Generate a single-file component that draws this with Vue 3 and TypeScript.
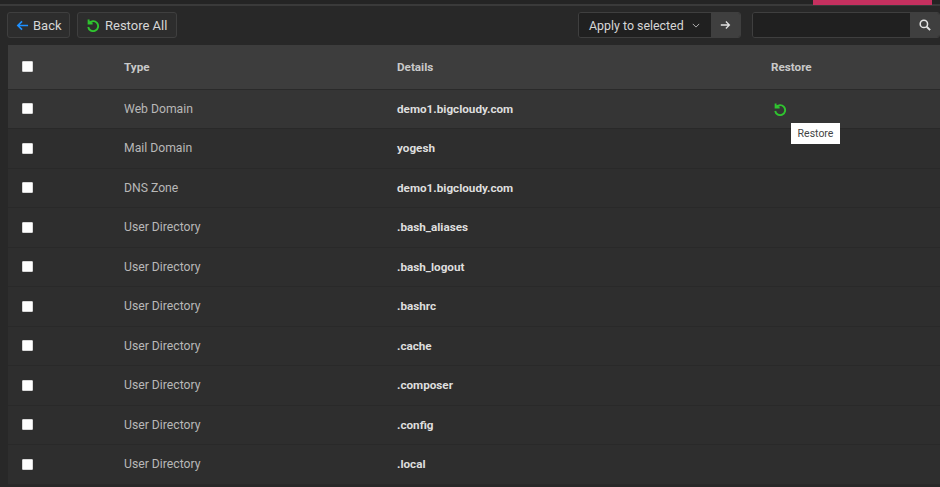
<script setup lang="ts">
interface Row { type: string; details: string }
const rows: Row[] = [
  { type: 'Web Domain', details: 'demo1.bigcloudy.com' },
  { type: 'Mail Domain', details: 'yogesh' },
  { type: 'DNS Zone', details: 'demo1.bigcloudy.com' },
  { type: 'User Directory', details: '.bash_aliases' },
  { type: 'User Directory', details: '.bash_logout' },
  { type: 'User Directory', details: '.bashrc' },
  { type: 'User Directory', details: '.cache' },
  { type: 'User Directory', details: '.composer' },
  { type: 'User Directory', details: '.config' },
  { type: 'User Directory', details: '.local' },
]
</script>

<template>
  <div class="page">
    <div class="topbar"><div class="accent"></div></div>
    <div class="toolbar">
      <div class="left">
        <button class="btn back">
          <svg class="ic" viewBox="0 0 14 14" width="13" height="13"><path d="M13 7H2M6.500 2.500 2 7l4.500 4.500" fill="none" stroke="#1e90ff" stroke-width="1.800"/></svg>
          Back
        </button>
        <button class="btn all">
          <svg class="ic" viewBox="0 0 14 14" width="14" height="14"><path d="M2.600 1.500v4h4M3 5.300A5 5 0 1 1 2.200 9" fill="none" stroke="#2fc42f" stroke-width="1.900"/></svg>
          Restore All
        </button>
      </div>
      <div class="right">
        <div class="group apply">
          <div class="field select"><span class="label">Apply to selected</span>
            <svg viewBox="0 0 10 6" width="8" height="5"><path d="M1 1l4 4 4-4" fill="none" stroke="#b5b5b5" stroke-width="1.200"/></svg>
          </div>
          <div class="addon">
            <svg viewBox="0 0 14 12" width="11" height="10"><path d="M1 6h11M7.500 1.500 12 6l-4.500 4.500" fill="none" stroke="#e2e2e2" stroke-width="1.600"/></svg>
          </div>
        </div>
        <div class="group search">
          <div class="field"></div>
          <div class="addon">
            <svg viewBox="0 0 14 14" width="12" height="12"><circle cx="5.700" cy="5.700" r="4.300" fill="none" stroke="#e2e2e2" stroke-width="1.800"/><path d="M9 9l4 4" stroke="#e2e2e2" stroke-width="2.200"/></svg>
          </div>
        </div>
      </div>
    </div>
    <div class="table">
      <div class="row head">
        <div class="cell"><input type="checkbox" class="cb" /></div>
        <div class="cell">Type</div>
        <div class="cell">Details</div>
        <div class="cell">Restore</div>
      </div>
      <div v-for="(r, i) in rows" :key="i" class="row" :class="{ hover: i === 0 }">
        <div class="cell"><input type="checkbox" class="cb" /></div>
        <div class="cell type">{{ r.type }}</div>
        <div class="cell details">{{ r.details }}</div>
        <div class="cell restore">
          <template v-if="i === 0">
            <svg viewBox="0 0 14 14" width="14" height="14"><path d="M2.600 1.500v4h4M3 5.300A5 5 0 1 1 2.200 9" fill="none" stroke="#2fc42f" stroke-width="1.900"/></svg>
            <span class="tip">Restore</span>
          </template>
        </div>
      </div>
    </div>
  </div>
</template>

<style>
html, body { margin: 0; background: #2b2b2b; overflow: hidden; }
</style>

<style scoped>
.page {
  width: 940px;
  height: 487px;
  overflow: hidden;
  background: #282828;
  font-family: "Roboto", "Liberation Sans", sans-serif;
  font-size: 12.2px;
  color: #c4c4c4;
}
.topbar {
  height: 4px;
  background: #242424;
  border-bottom: 2px solid #3a3a3a;
  position: relative;
}
.accent {
  position: absolute;
  left: 813px;
  top: 0;
  width: 119px;
  height: 5px;
  background: #c5305f;
}
.toolbar {
  height: 39px;
  box-sizing: border-box;
  display: flex;
  justify-content: space-between;
  padding: 6px 0 0 7px;
  background: #282828;
}
.left { display: flex; gap: 7px; }
.right { display: flex; gap: 11px; }
.btn {
  height: 26px;
  box-sizing: border-box;
  display: flex;
  align-items: center;
  gap: 4px;
  padding: 0 0 0 8px;
  background: #2d2d2d;
  border: 1px solid #3f3f3f;
  border-radius: 3px;
  color: #d6d6d6;
  font: inherit;
  font-size: 13px;
}
.back { width: 63px; }
.all { width: 100px; gap: 5px; }
.ic { flex: none; }
.group {
  height: 26px;
  display: flex;
  box-sizing: border-box;
  border: 1px solid #3f3f3f;
  border-radius: 3px;
  overflow: hidden;
}
.apply { width: 163px; }
.search { width: 188px; }
.field {
  flex: 1;
  min-width: 0;
  display: flex;
  align-items: center;
  justify-content: space-between;
  padding: 0 11px 0 10px;
  background: #202020;
  color: #d6d6d6;
  font-size: 12.4px;
}
.label { white-space: nowrap; }
.select svg { flex: none; }
.addon {
  flex: none;
  width: 29px;
  display: flex;
  align-items: center;
  justify-content: center;
  background: #3f3f3f;
}
.table { margin-left: 8px; }
.row {
  display: grid;
  grid-template-columns: 116px 273px 374px 1fr;
  align-items: center;
  height: 39.5px;
  border-bottom: 1px solid #292929;
  box-sizing: border-box;
  background: #2e2e2e;
}
.cell:first-child { padding-left: 14px; display: flex; }
.head {
  height: 44.5px;
  background: #3d3d3d;
  border-bottom: 1px solid #2a2a2a;
  font-weight: 700;
  font-size: 11.7px;
  color: #c9c9c9;
}
.hover { background: #353535; }
.cb {
  appearance: none;
  width: 11px;
  height: 11px;
  margin: 0;
  background: #fff;
  border: 1px solid #d8d8d8;
  border-radius: 1px;
}
.type { color: #b8b8b8; }
.details { font-weight: 700; font-size: 11.7px; color: #dedede; }
.restore { position: relative; display: flex; height: 14px; padding-left: 2px; }
.tip {
  position: absolute;
  left: 20px;
  top: 21.5px;
  width: 49px;
  height: 21px;
  display: flex;
  align-items: center;
  justify-content: center;
  background: #fff;
  color: #444;
  font-size: 10.5px;
}
</style>
